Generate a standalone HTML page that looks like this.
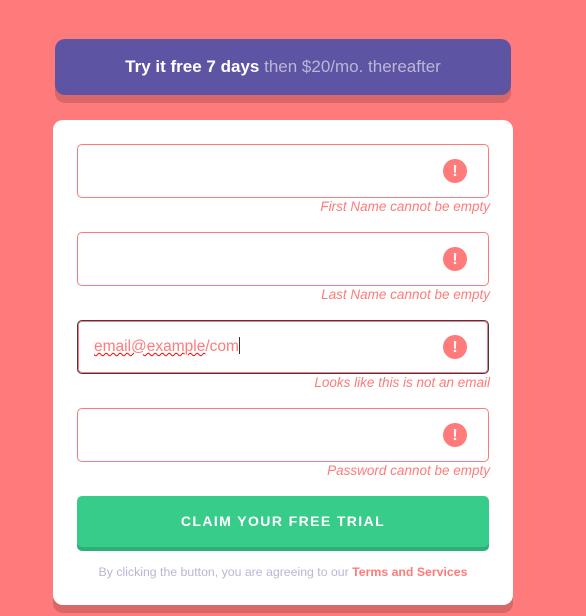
<!DOCTYPE html>
<html><head><style>
body{margin:0;width:586px;height:616px;background:#ff7a7a;font-family:"Liberation Sans",sans-serif;position:relative;overflow:hidden}
.banner{position:absolute;left:55px;top:39px;width:456px;height:56px;background:#5e54a4;border-radius:10px;box-shadow:0 8px 0 rgba(0,0,0,.15);color:#fff;font-size:17px;text-align:center;line-height:56px}
.banner b{font-weight:700}.banner span{color:#bab7d4}
.card{position:absolute;left:53px;top:120px;width:460px;height:485px;background:#fff;border-radius:10px;box-shadow:0 8px 0 rgba(0,0,0,.15)}
.in{position:absolute;left:24px;width:410px;height:52px;border:1px solid #ff7a7a;border-radius:5px}
.in.f{border:1px solid #3d3b48;box-shadow:inset 0 0 0 1px #ff7a7a}
.ic{position:absolute;right:21px;top:14px;width:24px;height:24px;border-radius:50%;background:#ff7a7a;color:#fff;font-weight:700;font-size:16px;text-align:center;line-height:25px}
.err{position:absolute;right:23px;font-size:13.5px;font-style:italic;color:#ff7a7a}
.val{position:absolute;left:16px;top:16px;font-size:15.5px;color:#ff7a7a}
.val u{text-decoration:underline wavy red;text-decoration-thickness:1px}
.cur{display:inline-block;width:1px;height:17px;background:#333;vertical-align:-3px}
.btn{position:absolute;left:24px;top:376px;width:412px;height:51px;background:#38cc8b;border-radius:5px;box-shadow:0 4px 0 #2fae77;color:#fff;font-size:14px;letter-spacing:1.4px;text-align:center;line-height:51px;font-weight:600}
.foot{position:absolute;left:0;width:460px;top:445px;text-align:center;font-size:12.3px;color:#b9b6d3}
.foot b{color:#ff7a7a}
</style></head><body>
<div class="banner"><b>Try it free 7 days</b> <span>then $20/mo. thereafter</span></div>
<div class="card">
<div class="in" style="top:24px"><div class="ic">!</div></div>
<div class="err" style="top:79px">First Name cannot be empty</div>
<div class="in" style="top:112px"><div class="ic">!</div></div>
<div class="err" style="top:167px">Last Name cannot be empty</div>
<div class="in f" style="top:200px"><div class="val"><u>email@example</u>/com<span class="cur"></span></div><div class="ic">!</div></div>
<div class="err" style="top:255px">Looks like this is not an email</div>
<div class="in" style="top:288px"><div class="ic">!</div></div>
<div class="err" style="top:343px">Password cannot be empty</div>
<div class="btn">CLAIM YOUR FREE TRIAL</div>
<div class="foot">By clicking the button, you are agreeing to our <b>Terms and Services</b></div>
</div>
</body></html>
